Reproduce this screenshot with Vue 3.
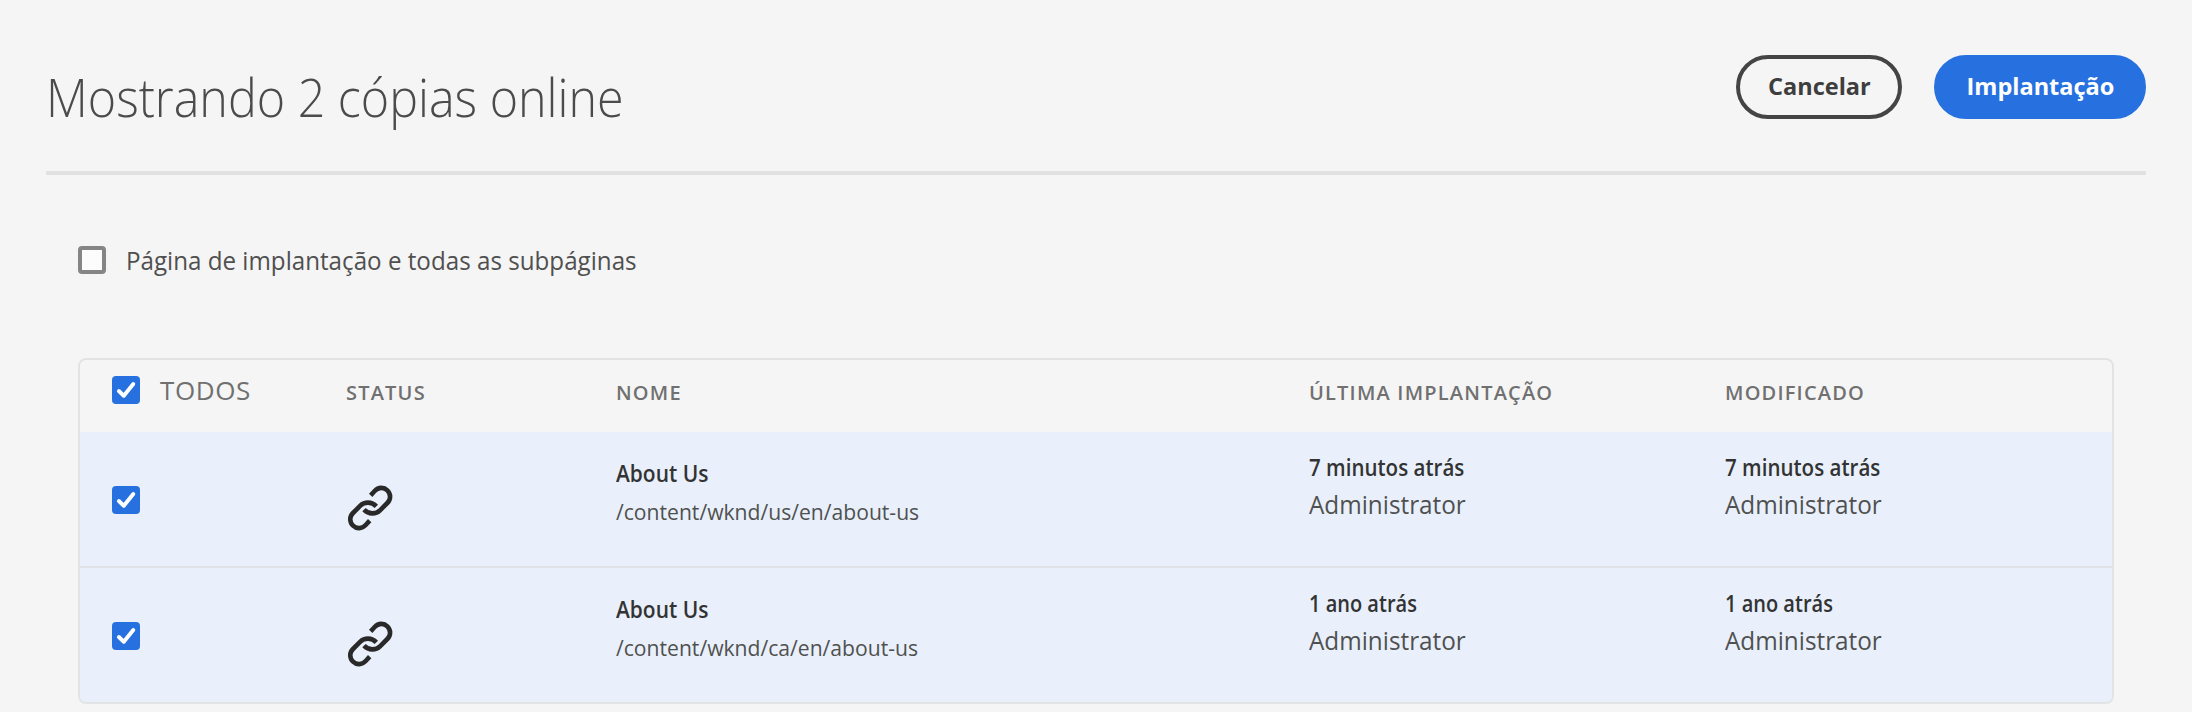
<script setup>
import { ref, computed } from 'vue'

const deep = ref(false)
const rows = ref([
  { selected: true, name: 'About Us', path: '/content/wknd/us/en/about-us', when: '7 minutos atrás', by: 'Administrator' },
  { selected: true, name: 'About Us', path: '/content/wknd/ca/en/about-us', when: '1 ano atrás', by: 'Administrator' },
])
const all = computed(() => rows.value.every((r) => r.selected))
function toggleAll() {
  const next = !all.value
  rows.value.forEach((r) => (r.selected = next))
}
</script>

<template>
  <main class="page">
    <header class="top">
      <h1 class="title"><span>Mostrando 2 cópias online</span></h1>
      <div class="actions">
        <button class="btn outline"><span>Cancelar</span></button>
        <button class="btn primary"><span>Implantação</span></button>
      </div>
    </header>

    <div class="option" @click="deep = !deep">
      <span class="box" :class="{ on: deep }">
        <svg v-if="deep" viewBox="0 0 28 28"><path d="M6.9 15 11.8 19.8 21.3 8" /></svg>
      </span>
      <span class="option-label">Página de implantação e todas as subpáginas</span>
    </div>

    <section class="table">
      <div class="row head">
        <div class="all" @click="toggleAll">
          <span class="box" :class="{ on: all }">
            <svg v-if="all" viewBox="0 0 28 28"><path d="M6.9 15 11.8 19.8 21.3 8" /></svg>
          </span>
          <span class="all-label">TODOS</span>
        </div>
        <div class="th">STATUS</div>
        <div class="th">NOME</div>
        <div class="th">ÚLTIMA IMPLANTAÇÃO</div>
        <div class="th">MODIFICADO</div>
      </div>
      <div v-for="row in rows" :key="row.path" class="row item" :class="{ selected: row.selected }">
        <div class="pick" @click="row.selected = !row.selected">
          <span class="box" :class="{ on: row.selected }">
            <svg v-if="row.selected" viewBox="0 0 28 28"><path d="M6.9 15 11.8 19.8 21.3 8" /></svg>
          </span>
        </div>
        <div class="status">
          <svg viewBox="48 41 144 144">
            <path d="M122 75 L134 62 C145 50 162 50 172 60 C183 71 183 87 172 98 L150 120 C138 132 116 133 102 118" />
            <path d="M119 151 L107 164 C96 176 79 176 69 166 C58 155 58 139 69 128 L91 106 C103 94 125 93 139 108" />
          </svg>
        </div>
        <div class="name">
          <div class="strong">{{ row.name }}</div>
          <div class="path">{{ row.path }}</div>
        </div>
        <div class="date">
          <div class="strong">{{ row.when }}</div>
          <div class="by">{{ row.by }}</div>
        </div>
        <div class="date">
          <div class="strong">{{ row.when }}</div>
          <div class="by">{{ row.by }}</div>
        </div>
      </div>
    </section>
  </main>
</template>

<style>
body {
  background: #f5f5f5;
}
</style>

<style scoped>
.page {
  box-sizing: border-box;
  height: 712px;
  overflow: hidden;
  background: #f5f5f5;
  color: #505050;
  font-family: "Open Sans", "Noto Sans", sans-serif;
  white-space: nowrap;
}
.top {
  box-sizing: border-box;
  display: flex;
  justify-content: space-between;
  height: 175px;
  margin: 0 46px;
  padding-top: 55px;
  border-bottom: 4px solid #e1e1e1;
}
.title {
  margin: 0;
  padding-top: 1px;
  color: #4b4b4b;
  font-size: 54px;
  font-weight: 300;
  line-height: 80px;
}
.title span,
.btn span {
  display: inline-block;
}
.title span {
  transform: scaleX(0.896);
  transform-origin: left;
}
.actions {
  display: flex;
  gap: 32px;
}
.btn {
  box-sizing: border-box;
  height: 64px;
  padding: 0 0 3px;
  border: 4px solid #444;
  border-radius: 32px;
  background: transparent;
  color: #3e3e3e;
  font: 700 24px/30px "Open Sans", "Noto Sans", sans-serif;
}
.outline {
  width: 166px;
}
.primary {
  width: 212px;
  border-color: #2670e0;
  background: #2670e0;
  color: #fff;
}
.btn span {
  transform: scaleX(0.98);
}
.option {
  display: flex;
  align-items: center;
  height: 40px;
  margin: 65px 0 0 78px;
}
.box {
  box-sizing: border-box;
  display: block;
  flex: none;
  width: 28px;
  height: 28px;
  border: 4px solid #858585;
  border-radius: 4px;
  background: #fcfcfc;
}
.box.on {
  border: 0;
  background: #2670e0;
}
.box svg {
  display: block;
  width: 28px;
  height: 28px;
}
.box path {
  fill: none;
  stroke: #fff;
  stroke-width: 3.9;
  stroke-linecap: round;
  stroke-linejoin: round;
}
.option-label {
  margin-left: 19px;
  padding-left: 1px;
  font-size: 26px;
  line-height: 40px;
  transform: scaleX(0.93);
  transform-origin: left;
}
.table {
  box-sizing: border-box;
  width: 2036px;
  margin: 78px 0 0 78px;
  border: 2px solid #e2e3e4;
  border-radius: 8px;
  overflow: hidden;
}
.row {
  display: grid;
  grid-template-columns: 266px 270px 693px 416px 1fr;
}
.head {
  height: 72px;
  color: #707070;
}
.all {
  display: flex;
  align-items: flex-start;
  padding: 16px 0 0 32px;
}
.all-label {
  margin: -5px 0 0 20px;
  font-size: 26px;
  line-height: 38px;
  letter-spacing: 0.6px;
}
.th {
  padding-top: 17px;
  font-size: 20px;
  font-weight: 600;
  line-height: 31px;
  letter-spacing: 1.2px;
}
.item {
  height: 134px;
}
.item + .item {
  border-top: 2px solid #e0e2e5;
}
.selected {
  background: #e9f0fb;
}
.pick {
  padding: 54px 0 0 32px;
}
.status {
  padding-top: 52px;
}
.status svg {
  display: block;
  width: 48px;
  height: 48px;
  fill: none;
  stroke: #292929;
  stroke-width: 13.8;
}
.name {
  padding-top: 22px;
}
.date {
  padding-top: 16px;
}
.strong,
.path,
.by {
  transform-origin: left;
}
.strong {
  color: #333;
  font-size: 23px;
  font-weight: 600;
  line-height: 38px;
  transform: scaleX(0.91);
}
.path {
  font-size: 22px;
  line-height: 39px;
  transform: scaleX(0.96);
}
.by {
  font-size: 25px;
  line-height: 36px;
  transform: scaleX(0.972);
}
.date .strong {
  transform: scaleX(0.893);
}
.item:last-child .date .strong {
  transform: scaleX(0.87);
}
</style>
